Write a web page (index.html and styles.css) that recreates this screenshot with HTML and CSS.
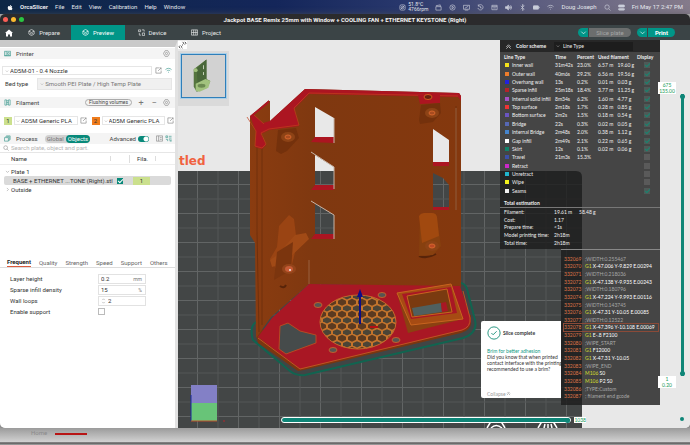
FILE: index.html
```html
<!DOCTYPE html>
<html lang="en">
<head>
  <meta charset="UTF-8">
  <meta name="viewport" content="width=device-width, initial-scale=1.0">
  <title>OrcaSlicer</title>
  <link rel="stylesheet" href="styles.css">
</head>
<body>

<!-- shared icons -->
<svg class="defs" width="0" height="0" aria-hidden="true">
  <symbol id="i-gear" viewBox="0 0 16 16"><path d="M5 1.500h6L15 8l-4 6.500H5L1 8z"/><circle cx="8" cy="8" r="2.500"/></symbol>
  <symbol id="i-edit" viewBox="0 0 16 16"><path d="M9 2H2v12h12V8M7 9l7-7M10 2h4v4"/></symbol>
  <symbol id="i-cube" viewBox="0 0 16 16"><path d="M8 1l6 3.500v7L8 15l-6-3.500v-7zM2 5l6 3 6-3M5 10l3 1.500 3-1.500"/></symbol>
  <symbol id="i-printer" viewBox="0 0 16 16"><path d="M1 3h14v10H1zM5 3v10M8 6h4v4H8zM1 13h14"/></symbol>
  <symbol id="i-spool" viewBox="0 0 16 16"><path d="M2 2h4v12H2zM10 2h4v12h-4zM6 4h4M6 8h4M6 12h4"/></symbol>
  <symbol id="i-layers" viewBox="0 0 16 16"><path d="M5 2h9v8l-2 2M3 4h9v8l-2 2M1 6h9v8H1z"/></symbol>
  <symbol id="i-search" viewBox="0 0 16 16"><circle cx="7" cy="7" r="5"/><path d="M11 11l4 4"/></symbol>
  <symbol id="i-wifi" viewBox="0 0 16 16"><path d="M1 6c4-4 10-4 14 0M4 9c2-2 6-2 8 0M7 12h2"/></symbol>
  <symbol id="i-down" viewBox="0 0 16 16"><path d="M3 6l5 5 5-5"/></symbol>
  <symbol id="i-right" viewBox="0 0 16 16"><path d="M6 3l5 5-5 5"/></symbol>
</svg>

<header class="menubar">
  <nav class="menus">
    <svg class="apple" viewBox="0 0 16 16"><path d="M11 1c0 2-1 3-3 3 0-2 1-3 3-3zM8 5c1 0 2-1 3-1s2 .5 3 1.500c-2 1.500-2 4 .5 5C14 13 12.500 15 11 15c-1 0-1.500-.5-2.500-.5S7 15 6 15c-2 0-4-3.500-4-6.500S4 4 5.500 4C6.500 4 7 5 8 5z"/></svg>
    <strong>OrcaSlicer</strong>
    <span>File</span><span>Edit</span><span>View</span><span>Calibration</span><span>Help</span><span>Window</span>
  </nav>
  <div class="status">
    <svg class="icon" viewBox="0 0 16 16"><rect x="2" y="2" width="12" height="12" rx="3"/><circle cx="8" cy="8" r="3"/><path d="M4 12l8-8"/></svg>
    <small class="temps">51.8°C<br>4766rpm</small>
    <svg class="icon" viewBox="0 0 16 16"><path d="M2 6h12v8H2zM2 4l10-2v4"/></svg>
    <svg class="icon" viewBox="0 0 16 16"><circle cx="8" cy="8" r="6"/><path d="M7 5l4 3-4 3z"/></svg>
    <svg class="icon" viewBox="0 0 16 16"><path d="M1 3h14v9H1zM4 14h8M4 10l8-5"/></svg>
    <svg class="icon" viewBox="0 0 16 16"><path d="M3 4a6 6 0 1 1-1 5M3 1v4h4M8 5v4h3"/></svg>
    <svg class="icon" viewBox="0 0 16 16"><path d="M2 3h12v10H2zM2 6h12M5 9h6"/></svg>
    <svg class="icon solid" viewBox="0 0 16 16"><path d="M1 6h3l4-4v12l-4-4H1zM10 5l2 3-2 3M13 3l2 5-2 5"/></svg>
    <svg class="icon" viewBox="0 0 16 16"><path d="M4 4l8 8-4 3V1l4 3-8 8"/></svg>
    <svg class="icon solid" viewBox="0 0 16 16"><rect x="0" y="4" width="13" height="8" rx="2"/><path d="M15 7v2"/></svg>
    <svg class="icon"><use href="#i-wifi"/></svg>
    <span>Doug Joseph</span>
    <svg class="icon"><use href="#i-search"/></svg>
    <svg class="icon solid" viewBox="0 0 16 16"><rect x="1" y="2" width="14" height="5" rx="2"/><rect x="1" y="10" width="14" height="4" rx="2"/></svg>
    <span class="clock">Fri May 17 2:47 PM</span>
  </div>
</header>

<div class="window">
  <div class="titlebar">
    <div class="lights"><i class="red"></i><i class="yellow"></i><i class="green"></i></div>
    <h1>Jackpot BASE Remix 25mm with Window + COOLING FAN + ETHERNET KEYSTONE (Right)</h1>
  </div>

  <div class="topbar">
    <button class="home" type="button" aria-label="Home"><svg viewBox="0 0 16 16"><path d="M8 1l8 7h-2v7h-4v-4H6v4H2V8H0z"/></svg></button>
    <button class="tab" type="button"><svg class="icon"><use href="#i-cube"/></svg>Prepare</button>
    <button class="tab active" type="button"><svg class="icon"><use href="#i-cube"/></svg>Preview</button>
    <button class="tab" type="button"><svg class="icon" viewBox="0 0 16 16"><path d="M1 2h5v4H1zM10 9h5v6h-5zM9 2h5v4M3 9v5h4"/></svg>Device</button>
    <button class="tab" type="button"><svg class="icon" viewBox="0 0 16 16"><path d="M1 2h14v12H1zM6 2v12M11 2v12M1 8h14"/></svg>Project</button>
    <div class="actions">
      <div class="split"><button type="button" aria-label="Slice options"><svg class="icon"><use href="#i-down"/></svg></button><button class="slice" type="button" disabled>Slice plate</button></div>
      <div class="split"><button type="button" aria-label="Print options"><svg class="icon"><use href="#i-down"/></svg></button><button class="print" type="button">Print</button></div>
    </div>
  </div>

  <main>
    <aside class="sidebar">
      <div class="panel-head"><svg class="icon teal"><use href="#i-printer"/></svg><h2>Printer</h2><svg class="icon end"><use href="#i-gear"/></svg></div>
      <div class="row machine">
        <label class="combo"><svg class="icon"><use href="#i-down"/></svg><select aria-label="Printer"><option>AD5M-01 - 0.4 Nozzle</option></select></label>
        <svg class="icon"><use href="#i-edit"/></svg>
        <svg class="icon teal"><use href="#i-wifi"/></svg>
      </div>
      <div class="row bed">
        <label for="bed">Bed type</label>
        <div class="combo muted"><svg class="icon"><use href="#i-down"/></svg><select id="bed"><option>Smooth PEI Plate / High Temp Plate</option></select></div>
      </div>

      <div class="panel-head">
        <svg class="icon teal"><use href="#i-spool"/></svg><h2>Filament</h2>
        <button class="flush" type="button">Flushing volumes</button>
        <button class="sign" type="button">+</button>
        <button class="sign" type="button">−</button>
        <svg class="icon"><use href="#i-gear"/></svg>
      </div>
      <div class="row filaments">
        <b class="chip lime">1</b>
        <label class="combo"><svg class="icon"><use href="#i-down"/></svg><select aria-label="Filament 1"><option>AD5M Generic PLA</option></select></label>
        <svg class="icon"><use href="#i-edit"/></svg>
        <b class="chip orange">2</b>
        <label class="combo"><svg class="icon"><use href="#i-down"/></svg><select aria-label="Filament 2"><option>AD5M Generic PLA</option></select></label>
        <svg class="icon"><use href="#i-edit"/></svg>
      </div>

      <div class="panel-head process">
        <svg class="icon teal"><use href="#i-layers"/></svg><h2>Process</h2>
        <div class="scope"><button type="button">Global</button><button class="on" type="button">Objects</button></div>
        <label class="advanced">Advanced <input type="checkbox" checked></label>
        <svg class="icon" viewBox="0 0 16 16"><path d="M1 2h14v12H1zM6 2v12M9 6h4M9 10h4"/></svg>
        <svg class="icon teal" viewBox="0 0 16 16"><path d="M2 2h4v4H2zM9 3h6M9 7h6M2 10h4v4M9 11h3v4M14 10v5"/></svg>
      </div>
      <label class="search"><svg class="icon"><use href="#i-search"/></svg><input type="text" placeholder="Search plate, object and part." aria-label="Search"></label>

      <div class="tree-head"><span>Name</span><span></span><span>Fila.</span><span></span></div>
      <div class="tree">
        <div class="node"><svg class="icon"><use href="#i-down"/></svg>Plate 1</div>
        <div class="node selected"><span>BASE + ETHERNET ...TONE (Right).stl</span><input class="tick" type="checkbox" checked aria-label="Printable"><span class="fila">1</span></div>
        <div class="node"><svg class="icon"><use href="#i-right"/></svg>Outside</div>
      </div>

      <div class="setting-tabs">
        <button class="active" type="button">Frequent</button><button type="button">Quality</button><button type="button">Strength</button><button type="button">Speed</button><button type="button">Support</button><button type="button">Others</button>
      </div>
      <div class="settings">
        <label for="layer">Layer height</label><div class="field"><input id="layer" type="text" value="0.2"><small>mm</small></div>
        <label for="infill">Sparse infill density</label><div class="field"><input id="infill" type="text" value="15"><small>%</small></div>
        <label for="loops">Wall loops</label><div class="field"><svg class="icon" viewBox="0 0 16 16"><path d="M4 5l4-4 4 4M4 11l4 4 4-4"/></svg><input id="loops" type="text" value="2"></div>
        <label for="support">Enable support</label><input id="support" class="box" type="checkbox">
      </div>
    </aside>

    <section class="viewport">
      <svg class="scene" viewBox="178 40 512 388" preserveAspectRatio="xMinYMin slice">
        <defs>
          <pattern id="grid" x="197" y="184" width="41" height="29" patternUnits="userSpaceOnUse">
            <rect width="41" height="29" fill="#434646"/>
            <path d="M0 .5h41M.5 0v29" stroke="#626565"/>
            <path d="M0 15h41M21 0v29" stroke="#525555"/>
          </pattern>
          <pattern id="hex" x="357" y="322" width="10" height="12" patternUnits="userSpaceOnUse">
            <rect width="10" height="12" fill="#c4742c"/>
            <path d="M5 .8l4 2v3l-4 2-4-2v-3z" fill="#5b3a20"/>
            <path d="M0 7.200l4 1.800v3H0zM10 7.200L6 9v3h4zM0 0h3L0 1.500zM10 0H7l3 1.500z" fill="#4b4436"/>
          </pattern>
          <linearGradient id="wall" x1="0" x2="1" y1="0" y2="0">
            <stop offset="0" stop-color="#8a3c10"/><stop offset=".3" stop-color="#7f3810"/><stop offset="1" stop-color="#84380e"/>
          </linearGradient>
        </defs>
        <rect x="178" y="40" width="512" height="388" fill="#e8e8e8"/>
        <path d="M178 171h398q6 0 6 6v251H178z" fill="url(#grid)"/>
        <text x="179" y="165" class="plate-name">tled</text>

        <!-- brim -->
        <path d="M256 322q-7 5-3 18l37 31q6 5 15 4l158-37q15-5 12-18l-8-31q-2-6-7-6" fill="#414545" stroke="#116450" stroke-width="2"/>
        <!-- base edge -->
        <path d="M256 335l2 8 40 28 6-1 157-37q10-3 10-10v-8L256 330z" fill="#7b3610"/>
        <!-- walls -->
        <path d="M250 116l18-15h2v20l35-32 154 4 2 3v191l-152-3-38 33-15 21-1-95-5-8z" fill="url(#wall)"/>
        <path d="M257 122v110l2 100M262 135v190M456 106v104" fill="none" stroke="#70300d"/>
        <path d="M309 260v24M456 108v102" stroke="#99603f"/>
        <!-- top faces -->
        <path d="M250 116l19-16v3l-15 12 9 8 7-2 35-32 154 4 2 3v5l-3-4-149-3-15 15 5 17-30 4-8 4 5 11-4 4-7-2 1-15z" fill="#ac1521"/>
        <path d="M254 115l10 9M458 96l-149-3-15 15 5 17-30 4-8 4 5 11-4 4-7-2 1-15-9-14" fill="none" stroke="#c2401c" stroke-width=".7"/>
        <path d="M418 95h22v8l-20 1z" fill="#ac1521"/>
        <ellipse cx="428" cy="97" rx="4" ry="2.500" fill="#68200f" stroke="#d45a20"/>
        <!-- window openings -->
        <path d="M315 107l19 11v20l-19-1zM433 129l16 11v23h-16zM315 155l19 12v5h-19z" fill="#e8e8e8"/>
        <path d="M315 171h19v14h-19zM315 204l19 11v20h-19zM433 173l10 5 6 7v22h-16z" fill="url(#grid)"/>
        <path d="M315 137h19v6l-23-1zM315 185h19v5h-23zM315 234h19v5h-23zM433 162h16v4h-16zM433 207h16v3h-16z" fill="#ac1521"/>
        <path d="M311 152l23 15v22M311 201l23 14v24M334 118v25" fill="none" stroke="#c7b5a8"/>
        <!-- mounting bosses -->
        <path d="M278 130l18-2 3 10-12 13-6 3-5-3z" fill="#74310c"/>
        <ellipse cx="288" cy="137" rx="7" ry="5" fill="#8d4316"/><ellipse cx="288" cy="137" rx="3" ry="2" fill="#a84c20" stroke="#d5662c"/>
        <path d="M421 105l19-2 1 10-8 9-13 2-1-4z" fill="#74310c"/>
        <ellipse cx="432" cy="113" rx="7" ry="5" fill="#8d4316"/><ellipse cx="432" cy="113" rx="3" ry="2" fill="#a84c20" stroke="#d5662c"/>
        <path d="M279 226l10-11 5 4 3 25-7 29-14-4-6-10 7-12z" fill="#9a4413"/>
        <path d="M270 260l6-4 19-21 11-2 3 6-25 24-12 4z" fill="#a14a16"/>
        <path d="M277 252l16-10-2 28-17 10z" fill="#7b350e"/>
        <ellipse cx="289" cy="269" rx="7" ry="5" fill="#93441a"/><ellipse cx="289" cy="269" rx="4" ry="3" fill="#c55b36"/><circle cx="290" cy="270" r="1" fill="#eee"/>
        <path d="M280 286q4 3 6-1M419 256q8 3 17-2" fill="none" stroke="#582409" stroke-width="2"/>
        <path d="M420 214l16 0 5 32-8 9-14 1z" fill="#87400f"/>
        <path d="M419 216q2-3 5-3h8q4 0 5 4l2 19-17 7z" fill="#a1490f"/>
        <ellipse cx="432" cy="246" rx="7" ry="5" fill="#8d4316"/><ellipse cx="432" cy="246" rx="3" ry="2" fill="#bd4924" stroke="#d5662c"/>
        <!-- floor -->
        <path d="M309 284l151 2 10 30q3 10-6 14l-164 39-42-32 14-19z" fill="#a91724"/>
        <path d="M258 338l42 31 162-39q9-3 8-12l-7-27" fill="none" stroke="#bf5421"/>
        <path d="M280 326l8-3 12 8 16 4v8l-11 4-19 7-7-5z" fill="#464b4b" stroke="#b84922"/>
        <ellipse cx="358" cy="322" rx="38" ry="27" fill="url(#hex)" stroke="#c36a2c"/>
        <g fill="#565552" stroke="#c0602d"><ellipse cx="318" cy="305" rx="4" ry="2.500"/><ellipse cx="382" cy="295" rx="4" ry="2.500"/><ellipse cx="396" cy="340" rx="4" ry="2.500"/><ellipse cx="333" cy="350" rx="4" ry="2.500"/></g>
        <!-- keystone frame -->
        <path d="M397 293l54-9 12 35-55 14z" fill="#8b4111"/>
        <path d="M397 293l54-9 12 35-52 6z" fill="#a64b13" stroke="#c8641f"/>
        <path d="M402 294l49-7 6 26-46 6z" fill="#a91724"/>
        <path d="M407 296l40-7 5 23-40 5z" fill="#7a3a10" stroke="#c8641f"/>
        <path d="M412 308l29-5 1 9-28 4z" fill="#50605f"/>
        <path d="M441 303l5-1 2 9-6 1z" fill="#a91724"/>
        <!-- axes -->
        <path d="M360 324v-28" stroke="#0d0d86" stroke-width="2"/><path d="M360 289l3 8h-6z" fill="#0d0d86"/>
        <path d="M370 327h8" stroke="#b40f14" stroke-width="2"/>
        <path d="M191 385h26v18h-26z" fill="#8380c6"/><path d="M191 403h26v18h-26z" fill="#68c478"/>
        <path d="M191 395v26" stroke="#1b2a9c"/><path d="M191 421h26" stroke="#c0522c"/><path d="M223 421h2" stroke="#b5242a"/>
        <!-- plate warning marks -->
        <path d="M487 428l6-10M499 418l6 10M491 428q5-5 11 0M538 428l6-10M551 418l6 10M544 428l1-4M548 428v-4M552 428l-1-4" fill="none" stroke="#fff" stroke-width="1.500"/>
      </svg>

      <svg class="collapse" viewBox="0 0 20 16"><path d="M10 1l3 3-3 3M15 1l3 3-3 3M5 9l-3 3 3 3M10 9l-3 3 3 3"/></svg>
      <div class="plates">
        <svg class="thumb" viewBox="0 0 44 42">
          <path d="M12 14l13-10v20l4 2-3 7-11 4-3-5z" fill="#55753f"/>
          <path d="M15 13l10-9v20l-9 5z" fill="#49673a"/>
          <path d="M14 29l10-5 5 2-2 7-9 4-4-1z" fill="#a2c27e"/>
          <ellipse cx="20" cy="31" rx="4" ry="2" fill="#6c8a52"/>
          <path d="M22 10v4M22 17v3" stroke="#c5d1b8"/>
          <circle cx="14" cy="15" r="2" fill="#a2c27e"/>
        </svg>
      </div>

      <div class="notice">
        <h3><svg viewBox="0 0 16 16"><circle cx="8" cy="8" r="7"/><path d="M5 8l2 2 4-4"/></svg>Slice complete</h3>
        <a href="#">Brim for better adhesion</a>
        <p>Did you know that when printed<br>contact interface with the printing<br>recommended to use a brim?</p>
        <button type="button">Collapse<svg viewBox="0 0 16 16"><path d="M3 8l5-5 5 5M3 13l5-5 5 5"/></svg></button>
      </div>

      <div class="legend">
        <div class="scheme">
          <svg class="icon" viewBox="0 0 16 16"><path d="M3 9l5-5 5 5M3 13l5-5 5 5"/></svg>
          <label for="scheme">Color scheme</label>
          <div class="combo"><svg class="icon"><use href="#i-down"/></svg><select id="scheme"><option>Line Type</option></select></div>
        </div>
        <table class="lines">
          <thead><tr><th>Line Type</th><th>Time</th><th>Percent</th><th colspan="2">Used filament</th><th>Display</th></tr></thead>
          <tbody id="lines"></tbody>
        </table>
        <h3>Total estimation</h3>
        <table class="totals">
          <tr><th>Filament:</th><td>19.61 m</td><td>58.48 g</td></tr>
          <tr><th>Cost:</th><td>1.17</td><td></td></tr>
          <tr><th>Prepare time:</th><td>&lt;1s</td><td></td></tr>
          <tr><th>Model printing time:</th><td>2h18m</td><td></td></tr>
          <tr><th>Total time:</th><td>2h18m</td><td></td></tr>
        </table>
      </div>

      <div class="gcode" id="gcode"></div>

      <div class="layers">
        <output>675<br>135.00</output>
        <div class="track">
          <input type="range" min="1" max="675" value="675" aria-label="Top layer">
          <input class="low" type="range" min="1" max="675" value="1" aria-label="Bottom layer">
        </div>
        <output>1<br>0.20</output>
        <i class="dot"></i>
      </div>
      <div class="moves"><input type="range" min="0" max="1038" value="1038" aria-label="Move"><output>1038</output></div>
    </section>
  </main>
</div>

<footer class="behind"><span>Home</span><i></i></footer>

<script src="script.js"></script>
</body>
</html>
```
FILE: styles.css
```css
* {
  box-sizing: border-box;
}

body {
  margin: 0;
  min-height: 100vh;
  display: flex;
  flex-direction: column;
  background: #b4b4b4;
  color: #333;
  font: 6px/8px Roboto, "Liberation Sans", sans-serif;
}

h1, h2, h3, p {
  margin: 0;
  font-size: inherit;
}

button, input, select {
  margin: 0;
  padding: 0;
  border: 0;
  background: none;
  color: inherit;
  font: inherit;
  appearance: none;
  outline: none;
}

.defs {
  position: absolute;
}

.icon {
  width: 7px;
  height: 7px;
  flex: none;
  fill: none;
  stroke: currentColor;
  stroke-width: 1.5;
}

.sidebar .icon {
  color: #888;
}

.sidebar .teal {
  color: #3f9a8f;
}

/* mac menu bar */
.menubar {
  height: 14px;
  display: flex;
  justify-content: space-between;
  align-items: center;
  padding: 0 7px;
  background: linear-gradient(90deg, #0d2746, #14265a 40%, #28376c 58%, #5d5e80 78%, #857b8b);
  color: #e8eaf0;
}

.menus, .status {
  display: flex;
  align-items: center;
}

.menus {
  gap: 7px;
}

.apple {
  width: 6px;
  height: 7px;
  fill: #fff;
}

.status {
  gap: 7px;
}

.status .icon {
  color: #ccd0dc;
}

.status .solid {
  fill: currentColor;
}

.temps {
  font-size: 5px;
  line-height: 5px;
  margin-left: -5px;
}

/* window chrome */
.window {
  flex: 1;
  display: flex;
  flex-direction: column;
  overflow: hidden;
  border-radius: 5px;
  box-shadow: 0 2px 8px #555;
}

.titlebar {
  height: 11px;
  display: grid;
  grid-template-columns: 1fr auto 1fr;
  align-items: center;
  padding: 0 3px;
  background: #2b2b2d;
  color: #f2f2f2;
}

.lights {
  display: flex;
  gap: 3px;
}

.lights i {
  width: 5px;
  height: 5px;
  border-radius: 50%;
}

.red { background: #fb5f57; }
.yellow { background: #fcbb2f; }
.green { background: #2ac642; }

.topbar {
  height: 15px;
  display: flex;
  background: #3b4446;
  color: #e6e8e8;
}

.home {
  width: 17px;
}

.home svg {
  width: 8px;
  height: 8px;
  fill: #fff;
  display: block;
  margin: auto;
}

.tab {
  width: 54px;
  display: flex;
  align-items: center;
  justify-content: center;
  gap: 4px;
}

.tab.active {
  background: #009688;
  color: #fff;
}

.actions {
  margin-left: auto;
  margin-right: 15px;
  display: flex;
  align-items: center;
  gap: 6px;
}

.split {
  height: 9px;
  display: flex;
  gap: 1px;
  border-radius: 5px;
  overflow: hidden;
}

.split button {
  background: #009688;
  color: #fff;
  width: 10px;
  display: flex;
  align-items: center;
  justify-content: center;
}

.split .slice {
  width: 42px;
  background: #6c6e6e;
  color: #a4a6a6;
}

.split .print {
  width: 27px;
  font-weight: bold;
}

main {
  flex: 1;
  display: flex;
}

/* sidebar */
.sidebar {
  width: 178px;
  flex: none;
  background: #fff;
  border-top: 7px solid #c9c9c9;
  border-right: 3px solid #e2e2e2;
}

.panel-head {
  height: 11px;
  margin-top: 8px;
  display: flex;
  align-items: center;
  gap: 5px;
  padding: 0 5px 0 4px;
  background: #f4f4f4;
  color: #444;
}

.panel-head:first-child {
  margin-top: 1px;
}

.panel-head h2 {
  font-weight: normal;
  margin-right: auto;
}

.row {
  display: flex;
  align-items: center;
  gap: 3px;
  padding: 0 3px 0 2px;
}

.combo {
  flex: 1;
  min-width: 0;
  height: 9px;
  display: flex;
  align-items: center;
  gap: 1px;
  padding-left: 2px;
  border: 1px solid #e6e6e6;
}

.combo .icon {
  width: 4px;
  height: 4px;
}

.combo select {
  flex: 1;
  min-width: 0;
}

.machine {
  margin-top: 7px;
}

.bed {
  margin-top: 3px;
  gap: 9px;
  padding-left: 5px;
}

.bed .combo {
  height: 12px;
}

.muted {
  background: #f0f0f0;
  color: #777;
}

.filaments {
  margin-top: 8px;
  padding: 0 1px 0 4px;
  gap: 2px;
}

.filaments .combo {
  padding-left: 1px;
}

.bed + .panel-head {
  margin-top: 7px;
}

.chip {
  width: 8px;
  height: 8px;
  text-align: center;
  font-weight: normal;
}

.lime { background: #cbe08d; }
.orange { background: #f07c1c; margin-left: 3px; }

.flush {
  padding: 0 3px;
  height: 7px;
  border: 1px solid #aaa;
  border-radius: 4px;
  font-size: 5px;
  line-height: 5px;
}

.sign {
  width: 8px;
  font-size: 9px;
  color: #777;
}

.process {
  padding-right: 3px;
  gap: 2px;
}

.process .icon:first-child {
  margin-right: 3px;
}

.scope {
  display: flex;
  background: #d0d0d0;
  border-radius: 4px;
  margin-right: auto;
}

.panel-head.process h2 {
  margin-right: 5px;
}

.scope button {
  padding: 0 2px;
  color: #777;
}

.scope .on {
  background: #08897a;
  color: #fff;
  border-radius: 4px;
}

.advanced {
  display: flex;
  align-items: center;
  gap: 2px;
  margin-right: 5px;
}

.advanced input {
  width: 11px;
  height: 6px;
  border-radius: 3px;
  background: radial-gradient(circle at 8px 3px, #fff 2px, #08897a 3px);
}

.search {
  height: 9px;
  display: flex;
  align-items: center;
  gap: 2px;
  padding-left: 3px;
  border-bottom: 1px solid #e6e6e6;
}

.search .icon {
  width: 6px;
  height: 6px;
}

.search input {
  flex: 1;
}

.search input::placeholder {
  color: #b4b4b4;
}

.tree-head {
  height: 12px;
  display: grid;
  grid-template-columns: 1fr 19px 26px 20px;
  align-items: center;
  padding-left: 11px;
  border-bottom: 1px solid #eee;
}

.tree-head span + span {
  border-left: 1px solid #ddd;
  text-align: center;
  min-height: 5px;
}

.tree {
  height: 93px;
  padding: 2px 4px 0;
}

.node {
  height: 9px;
  display: flex;
  align-items: center;
  padding-left: 1px;
  gap: 1px;
}

.node .icon {
  width: 5px;
  height: 5px;
}

.selected {
  background: #dadada;
  border-radius: 2px;
  padding-left: 9px;
  gap: 0;
}

.selected span:first-child {
  flex: 1;
  white-space: nowrap;
}

.tick {
  width: 6px;
  height: 6px;
  margin-right: 10px;
  background: #08897a;
}

.tick::after, .eye:checked::after {
  content: "";
  display: block;
  width: 4px;
  height: 2px;
  margin: 1px;
  border: solid #fff;
  border-width: 0 0 1px 1px;
  transform: rotate(-45deg);
}

.fila {
  width: 17px;
  margin-right: 21px;
  background: #cbe08d;
  text-align: center;
}

.setting-tabs {
  height: 10px;
  display: flex;
  gap: 8px;
  padding: 0 7px;
  border-bottom: 1px solid #ddd;
  color: #666;
}

.setting-tabs .active {
  color: #222;
  font-weight: bold;
  border-bottom: 1px solid #dc5a3c;
}

.settings {
  display: grid;
  grid-template-columns: 88px 48px;
  grid-auto-rows: 11px;
  align-items: center;
  padding: 5px 0 0 10px;
}

.field {
  height: 10px;
  display: flex;
  align-items: center;
  gap: 2px;
  padding: 0 3px 0 2px;
  border: 1px solid #e2e2e2;
}

.field input {
  flex: 1;
  min-width: 0;
}

.field small {
  font-size: 5px;
  color: #777;
}

.field .icon {
  width: 5px;
  height: 6px;
}

.box {
  width: 7px;
  height: 7px;
  border: 1px solid #bbb;
}

/* 3d preview */
.viewport {
  flex: 1;
  position: relative;
  overflow: hidden;
  background: #e8e8e8;
  font: 5px/6px Lato, "Open Sans", sans-serif;
}

.scene {
  position: absolute;
  width: 100%;
  height: 100%;
}

.plate-name {
  font: bold 12px "DejaVu Sans", sans-serif;
  fill: #f0623f;
}

.collapse {
  position: absolute;
  top: 1px;
  left: 0;
  width: 9px;
  height: 8px;
  background: #fff;
  fill: none;
  stroke: #444;
  stroke-width: 2;
}

.plates {
  position: absolute;
  top: 11px;
  left: 0;
  padding: 3px;
  padding-bottom: 8px;
  background: #dadada;
}

.thumb {
  display: block;
  width: 45px;
  height: 44px;
  border: 1px solid #2f7fba;
  outline: 1px solid #a9cfe8;
  background: #d2d2d2;
}

.notice {
  position: absolute;
  left: 303px;
  right: 129px;
  bottom: 30px;
  height: 77px;
  padding: 5px 0 0 6px;
  overflow: hidden;
  white-space: nowrap;
  background: #fff;
  border-radius: 2px 0 0 2px;
}

.notice h3 {
  display: flex;
  align-items: center;
  gap: 2px;
  margin-bottom: 8px;
  font-size: 5px;
}

.notice h3 svg {
  width: 14px;
  height: 14px;
  fill: none;
  stroke: #0f8a72;
}

.notice a {
  color: #0f9a84;
  text-decoration: none;
}

.notice button {
  position: absolute;
  left: 6px;
  bottom: 1px;
  color: #999;
}

.notice button svg {
  width: 5px;
  height: 5px;
  fill: none;
  stroke: currentColor;
  stroke-width: 2;
}

.legend {
  position: absolute;
  top: 0;
  right: 30px;
  width: 160px;
  background: rgba(27, 27, 27, .8);
  color: #f0f0f0;
  padding-bottom: 2px;
}

.scheme {
  height: 12px;
  display: flex;
  align-items: center;
  padding-left: 5px;
  background: rgba(20, 20, 20, .6);
  font-weight: bold;
}

.scheme label {
  margin: 0 4px;
  width: 34px;
}

.scheme .combo {
  flex: none;
  width: 79px;
  border: 0;
  background: #1d1d1d;
  font-weight: normal;
}

.scheme .combo select {
  padding-left: 2px;
}

.legend table {
  width: 100%;
  border-spacing: 0;
  table-layout: fixed;
}

.legend th, .legend td {
  padding: 0;
  text-align: left;
  white-space: nowrap;
}

.lines {
  height: 143px;
}

.lines thead tr {
  height: 9px;
}

.lines th:first-child { width: 55px; padding-left: 4px; }
.lines th:nth-child(2) { width: 22px; }
.lines th:nth-child(3) { width: 21px; }
.lines th:nth-child(4) { width: 39px; }

.legend .lines th:first-child {
  padding-left: 4px;
}

.legend .lines td:first-child {
  padding-left: 5px;
}

.legend .lines td:last-child {
  padding-left: 7px;
}

.swatch {
  display: inline-block;
  width: 4px;
  height: 4px;
  margin-right: 3px;
}

.eye {
  display: block;
  width: 6px;
  height: 6px;
  background: #5a5a5a;
}

.eye:checked {
  background: #4e5a57;
}

.eye:checked::after {
  border-color: #1a8470;
}

.legend h3 {
  margin-top: 5px;
  padding: 0 0 1px 4px;
  border-bottom: 1px solid #777;
}

.totals {
  height: 39px;
}

.totals th {
  width: 54px;
  font-weight: normal;
}

.legend .totals th {
  padding-left: 4px;
}

.totals td:nth-child(2) {
  width: 25px;
}

.gcode {
  position: absolute;
  top: 209px;
  right: 30px;
  bottom: 23px;
  width: 99px;
  padding: 5px 2px 5px 3px;
  display: grid;
  grid-auto-rows: 1fr;
  background: rgba(27, 27, 27, .8);
  border-top: 1px solid #888;
  color: #fff;
  white-space: nowrap;
}

.gcode div {
  display: grid;
  grid-template-columns: 21px 1fr;
  align-items: center;
}

.gcode .current {
  outline: 1px solid #8a4a38;
}

.num { color: #dd7448; }
.cmd { color: #d2df30; }
.note { color: #a8a8a8; }

/* sliders */
.layers {
  position: absolute;
  top: 42px;
  right: 5px;
  bottom: 7px;
  width: 27px;
  display: flex;
  flex-direction: column;
}

.layers output, .moves output {
  color: #169a58;
  background: #fff;
}

.layers output {
  width: 18px;
  text-align: center;
}

.track {
  flex: 1;
  display: grid;
  justify-items: end;
}

.track input {
  grid-area: 1 / 1;
  writing-mode: vertical-lr;
  direction: rtl;
  width: 5px;
  height: 100%;
  background: linear-gradient(90deg, transparent 1px, #0e8577 1px 4px, transparent 4px);
}

.track .low {
  background: none;
}

input[type="range"]::-webkit-slider-thumb {
  appearance: none;
  width: 5px;
  height: 5px;
  border-radius: 50%;
  background: #0e8577;
}

.dot {
  width: 4px;
  height: 4px;
  margin: 29px 1px 0 auto;
  border-radius: 50%;
  background: #0e8577;
}

.moves {
  position: absolute;
  left: 103px;
  right: 104px;
  bottom: 5px;
  display: flex;
  align-items: center;
  gap: 3px;
}

.moves input {
  flex: 1;
  height: 6px;
  border: 1px solid #fff;
  border-radius: 3px;
  background: #0e8577;
}

/* window behind the slicer */
.behind {
  height: 17px;
  display: flex;
  align-items: flex-start;
  gap: 8px;
  padding: 1px 0 0 31px;
  background: linear-gradient(#9b9b9b, #d0d0d0 80%, #555 88%, #aaa);
  color: #8a8a8a;
}

.behind i {
  width: 32px;
  height: 2px;
  margin-top: 4px;
  background: #b81414;
}
```
FILE: script.js
```js
const lines = [
  ['#f5e21b', 'Inner wall', '31m42s', '23.0%', '6.57 m', '19.60 g', true],
  ['#ee7d2b', 'Outer wall', '40m6s', '29.2%', '6.56 m', '19.56 g', true],
  ['#2222e0', 'Overhang wall', '13s', '0.2%', '0.01 m', '0.03 g', true],
  ['#b4232a', 'Sparse infill', '25m18s', '18.4%', '3.77 m', '11.25 g', true],
  ['#a552c8', 'Internal solid infill', '8m34s', '6.2%', '1.60 m', '4.77 g', true],
  ['#ee3434', 'Top surface', '2m18s', '1.7%', '0.28 m', '0.85 g', true],
  ['#6a55c0', 'Bottom surface', '2m2s', '1.5%', '0.18 m', '0.54 g', true],
  ['#5668b4', 'Bridge', '22s', '0.3%', '0.02 m', '0.05 g', true],
  ['#4584cc', 'Internal Bridge', '2m48s', '2.0%', '0.38 m', '1.12 g', true],
  ['#ffffff', 'Gap infill', '2m49s', '2.1%', '0.22 m', '0.65 g', true],
  ['#10836a', 'Skirt', '12s', '0.1%', '0.02 m', '0.06 g', true],
  ['#3b4fa8', 'Travel', '21m3s', '15.3%', '', '', false],
  ['#cc28c8', 'Retract', '', '', '', '', false],
  ['#20b4cc', 'Unretract', '', '', '', '', false],
  ['#f2f21c', 'Wipe', '', '', '', '', false],
  ['#f0f0f0', 'Seams', '', '', '', '', true]
];

document.getElementById('lines').innerHTML = lines.map(l =>
  `<tr><td><i class="swatch" style="background:${l[0]}"></i>${l[1]}</td><td>${l[2]}</td><td>${l[3]}</td><td>${l[4]}</td><td>${l[5]}</td>` +
  `<td><input class="eye" type="checkbox" aria-label="${l[1]}" ${l[6] ? 'checked' : ''}></td></tr>`
).join('');

const code = [
  ';WIDTH:0.255467', 'G1 X-47.006 Y-9.829 E.00294', ';WIDTH:0.218036', 'G1 X-47.138 Y-9.935 E.00243',
  ';WIDTH:0.180796', 'G1 X-47.224 Y-9.993 E.00116', ';WIDTH:0.143745', 'G1 X-47.31 Y-10.05 E.00085',
  ';WIDTH:0.12522', 'G1 X-47.396 Y-10.108 E.00069', 'G1 E-.8 F2100', ';WIPE_START', 'G1 F12000',
  'G1 X-47.31 Y-10.05', ';WIPE_END', 'M106 S0', 'M106 P2 S0', ';TYPE:Custom', '; filament end gcode'
];

document.getElementById('gcode').innerHTML = code.map((text, i) => {
  const cmd = text.split(' ')[0];
  const body = text[0] === ';'
    ? `<span class="note">${text}</span>`
    : `<span><span class="cmd">${cmd}</span>${text.slice(cmd.length)}</span>`;
  return `<div class="${i === 9 ? 'current' : ''}"><span class="num">${332069 + i}</span>${body}</div>`;
}).join('');
```
